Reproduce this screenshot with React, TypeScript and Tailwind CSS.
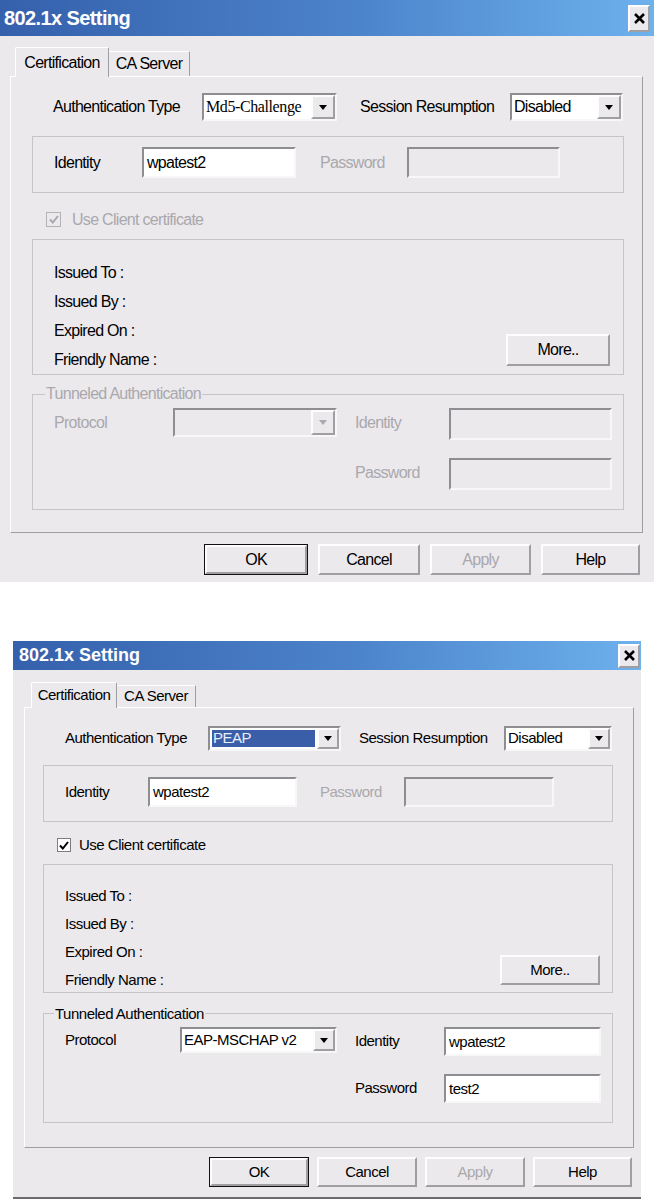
import React from "react";

// two copies of the same dialog, second one is a bit smaller in the screenshot
const A = {
  root: "w-[654px] h-[582px] text-[16px] tracking-[-0.7px]",
  title: "h-[36px] pl-[4px] pr-[4px]",
  titleText: "text-[20px] tracking-[-0.6px]",
  close: "w-[22px] h-[27px]",
  body: "pl-[10px]",
  tabs: "mt-[11px] ml-[5px]",
  certTab: "w-[94px] h-[30px]",
  caTab: "w-[81px] h-[25px]",
  panel: "w-[633px] h-[457px]",
  authRow: "pt-[16px] pl-[42px]",
  authLabel: "w-[149px]",
  authSelect: "w-[135px] h-[28px]",
  sessLabel: "ml-[23px] w-[150px]",
  sessSelect: "w-[113px] h-[28px]",
  arrow: "w-[24px]",
  group: "ml-[21px] w-[592px]",
  identGroup: "mt-[15px] h-[57px] pt-[10px] pl-[21px]",
  identLabel: "w-[88px] h-[31px]",
  identInput: "w-[154px] h-[31px]",
  pwLabel: "ml-[24px] w-[87px] h-[31px]",
  pwInput: "w-[153px] h-[31px]",
  checkRow: "mt-[19px] ml-[35px] h-[15px] gap-[11px]",
  box: "w-[15px] h-[15px]",
  certGroup: "mt-[12px] h-[136px]",
  certRows: "pt-[18px] pl-[21px]",
  certRow: "h-[29px]",
  more: "w-[104px] h-[32px] mr-[13px] mb-[8px]",
  tunGroup: "mt-[19px] h-[116px] pt-[13px] pl-[21px]",
  legend: "left-[12px] -top-[11px]",
  protoLabel: "w-[119px] h-[29px]",
  protoSelect: "w-[164px] h-[29px]",
  tIdLabel: "ml-[18px] w-[94px] h-[29px]",
  tInput: "w-[163px] h-[32px]",
  pwRow: "mt-[18px] pl-[283px]",
  btnRow: "mt-[11px] pr-[14px] gap-[10px]",
  ok: "w-[104px] h-[31px]",
  cancel: "w-[102px] h-[31px]",
  apply: "w-[101px] h-[31px]",
  help: "w-[99px] h-[31px]",
};

const B: typeof A = {
  root: "w-[628px] h-[558px] ml-[13px] mt-[59px] text-[15px] tracking-[-0.5px] border-b-2 border-[#6b6b6f]",
  title: "h-[29px] pl-[6px] pr-[1px]",
  titleText: "text-[18px] tracking-[0px]",
  close: "w-[22px] h-[24px]",
  body: "pl-[11px]",
  tabs: "mt-[12px] ml-[7px]",
  certTab: "w-[86px] h-[26px]",
  caTab: "w-[79px] h-[22px]",
  panel: "w-[610px] h-[441px]",
  authRow: "pt-[18px] pl-[40px]",
  authLabel: "w-[143px]",
  authSelect: "w-[133px] h-[25px]",
  sessLabel: "ml-[18px] w-[145px]",
  sessSelect: "w-[108px] h-[25px]",
  arrow: "w-[22px]",
  group: "ml-[18px] w-[570px]",
  identGroup: "mt-[14px] h-[57px] pt-[11px] pl-[21px]",
  identLabel: "w-[83px] h-[30px]",
  identInput: "w-[149px] h-[30px]",
  pwLabel: "ml-[23px] w-[84px] h-[30px]",
  pwInput: "w-[150px] h-[30px]",
  checkRow: "mt-[16px] ml-[32px] h-[14px] gap-[8px]",
  box: "w-[14px] h-[14px]",
  certGroup: "mt-[12px] h-[129px]",
  certRows: "pt-[17px] pl-[21px]",
  certRow: "h-[28px]",
  more: "w-[100px] h-[30px] mr-[12px] mb-[7px]",
  tunGroup: "mt-[20px] h-[110px] pt-[13px] pl-[21px]",
  legend: "left-[10px] -top-[10px]",
  protoLabel: "w-[115px] h-[26px]",
  protoSelect: "w-[157px] h-[26px]",
  tIdLabel: "ml-[18px] w-[89px] h-[29px]",
  tInput: "w-[157px] h-[29px]",
  pwRow: "mt-[18px] pl-[272px]",
  btnRow: "mt-[9px] pr-[9px] gap-[8px]",
  ok: "w-[100px] h-[30px]",
  cancel: "w-[100px] h-[30px]",
  apply: "w-[100px] h-[30px]",
  help: "w-[99px] h-[30px]",
};

const sunken =
  "border-2 border-t-[#8e8d92] border-l-[#8e8d92] border-b-[#f7f7f7] border-r-[#f7f7f7]";
const raised =
  "border-2 border-t-[#fdfdfd] border-l-[#fdfdfd] border-b-[#9f9ea3] border-r-[#9f9ea3]";
const gray = "text-[#a9a8ac]";

function Arrow({ off }: { off?: boolean }) {
  return (
    <svg width="8" height="5" viewBox="0 0 8 5">
      <path d="M0 0h8L4 5z" fill={off ? "#a9a8ac" : "#000"} />
    </svg>
  );
}

function Select({
  cls,
  arrow,
  value,
  off,
  hl,
  serif,
}: {
  cls: string;
  arrow: string;
  value?: string;
  off?: boolean;
  hl?: boolean;
  serif?: boolean;
}) {
  return (
    <div className={`flex ${sunken} ${off ? "bg-[#ece9ed]" : "bg-white"} ${cls}`}>
      <div className="flex-1 flex items-stretch p-[2px] overflow-hidden">
        {hl ? (
          <span className="flex-1 flex items-center pl-[1px] bg-[#3a5ea8] text-[#e8eefc]">{value}</span>
        ) : (
          <span className={`flex-1 flex items-center whitespace-nowrap ${serif ? "font-['Liberation_Serif',serif] tracking-[-0.4px]" : ""}`}>
            {value}
          </span>
        )}
      </div>
      <div className={`flex items-center justify-center bg-[#ece9ed] ${raised} ${arrow}`}>
        <Arrow off={off} />
      </div>
    </div>
  );
}

function Input({ cls, value, off }: { cls: string; value?: string; off?: boolean }) {
  return (
    <div className={`flex items-start pt-[2px] pl-[3px] ${sunken} ${off ? "bg-[#ece9ed]" : "bg-white"} ${cls}`}>
      {value}
    </div>
  );
}

function Btn({ cls, label, def, off }: { cls: string; label: string; def?: boolean; off?: boolean }) {
  if (def)
    return (
      <div className={`border border-[#111] ${cls}`}>
        <div className={`w-full h-full flex items-center justify-center bg-[#ece9ed] ${raised}`}>{label}</div>
      </div>
    );
  return (
    <div className={`flex items-center justify-center bg-[#ece9ed] ${raised} ${off ? gray : ""} ${cls}`}>
      {label}
    </div>
  );
}

function Dialog({ c, second }: { c: typeof A; second?: boolean }) {
  const tOff = !second;
  return (
    <div className={`flex flex-col bg-[#ece9ed] text-black font-['Liberation_Sans',Arial,sans-serif] ${c.root}`}>
      <div className={`flex items-center justify-between bg-[linear-gradient(to_right,#3560ac,#4c84cb_55%,#6db1ed)] ${c.title}`}>
        <span className={`text-white font-bold ${c.titleText}`}>802.1x Setting</span>
        <div className={`flex items-center justify-center bg-[#ebe9ee] ${raised} ${c.close}`}>
          <svg width="11" height="11" viewBox="0 0 11 11">
            <path d="M1 1l9 9M10 1l-9 9" stroke="#000" strokeWidth="2.6" />
          </svg>
        </div>
      </div>

      <div className={c.body}>
        <div className={`relative z-10 flex items-end ${c.tabs}`}>
          <div className={`flex items-center justify-center bg-[#ece9ed] border-t border-l border-r border-t-white border-l-white border-r-[#9f9ea3] rounded-t-[2px] ${c.certTab}`}>
            Certification
          </div>
          <div className={`flex items-center justify-center mb-[1px] border-t border-r border-t-white border-r-[#9f9ea3] ${c.caTab}`}>
            CA Server
          </div>
        </div>

        <div className={`-mt-[1px] border border-t-white border-l-white border-r-[#9f9ea3] border-b-[#9f9ea3] ${c.panel}`}>
          {/* auth type row */}
          <div className={`flex items-center ${c.authRow}`}>
            <span className={c.authLabel}>Authentication Type</span>
            <Select
              cls={c.authSelect}
              arrow={c.arrow}
              value={second ? "PEAP" : "Md5-Challenge"}
              hl={second}
              serif={!second}
            />
            <span className={c.sessLabel}>Session Resumption</span>
            <Select cls={c.sessSelect} arrow={c.arrow} value="Disabled" />
          </div>

          {/* identity */}
          <div className={`flex items-start border border-[#c6c4c9] ${c.group} ${c.identGroup}`}>
            <span className={`flex items-center ${c.identLabel}`}>Identity</span>
            <Input cls={c.identInput} value="wpatest2" />
            <span className={`flex items-center ${gray} ${c.pwLabel}`}>Password</span>
            <Input cls={c.pwInput} off />
          </div>

          {/* client cert */}
          <div className={`flex items-center ${c.checkRow}`}>
            <div
              className={`flex items-center justify-center border ${
                second ? "bg-white border-[#7d7c81]" : "bg-[#ece9ed] border-[#b3b2b6]"
              } ${c.box}`}
            >
              <svg width="10" height="9" viewBox="0 0 10 9">
                <path d="M1 4.5l2.8 3L9 1" fill="none" stroke={second ? "#000" : "#a9a8ac"} strokeWidth="2" />
              </svg>
            </div>
            <span className={second ? "" : gray}>Use Client certificate</span>
          </div>

          <div className={`flex justify-between items-end border border-[#c6c4c9] ${c.group} ${c.certGroup}`}>
            <div className={`flex flex-col self-start ${c.certRows}`}>
              {["Issued To :", "Issued By :", "Expired On :", "Friendly Name :"].map((t) => (
                <span key={t} className={`flex items-center ${c.certRow}`}>
                  {t}
                </span>
              ))}
            </div>
            <Btn cls={c.more} label="More.." />
          </div>

          {/* tunneled */}
          <div className={`relative border border-[#c6c4c9] ${c.group} ${c.tunGroup}`}>
            <span className={`absolute bg-[#ece9ed] px-[1px] leading-[20px] ${tOff ? gray : ""} ${c.legend}`}>
              Tunneled Authentication
            </span>
            <div className="flex items-start">
              <span className={`flex items-center ${tOff ? gray : ""} ${c.protoLabel}`}>Protocol</span>
              <Select
                cls={c.protoSelect}
                arrow={c.arrow}
                value={second ? "EAP-MSCHAP v2" : ""}
                off={tOff}
              />
              <span className={`flex items-center ${tOff ? gray : ""} ${c.tIdLabel}`}>Identity</span>
              <Input cls={c.tInput} value={second ? "wpatest2" : ""} off={tOff} />
            </div>
            <div className={`flex items-start ${c.pwRow}`}>
              <span className={`flex items-center ${tOff ? gray : ""} ${c.tIdLabel}`}>Password</span>
              <Input cls={c.tInput} value={second ? "test2" : ""} off={tOff} />
            </div>
          </div>
        </div>
      </div>

      <div className={`flex justify-end ${c.btnRow}`}>
        <Btn cls={c.ok} label="OK" def />
        <Btn cls={c.cancel} label="Cancel" />
        <Btn cls={c.apply} label="Apply" off />
        <Btn cls={c.help} label="Help" />
      </div>
    </div>
  );
}

export default function App() {
  return (
    <div className="w-[654px] h-[1201px] bg-white overflow-hidden">
      <Dialog c={A} />
      <Dialog c={B} second />
    </div>
  );
}
